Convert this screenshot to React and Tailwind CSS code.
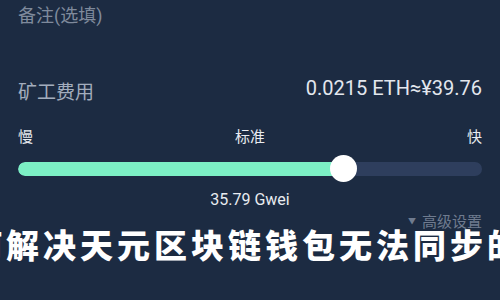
import React from "react";

export default function App() {
  const pct = 70;
  return (
    <div
      className="relative w-[500px] h-[300px] overflow-hidden bg-[#1c2b42]"
      style={{ fontFamily: '"Roboto", "Noto Sans CJK SC", sans-serif' }}
    >
      <div className="px-[18px]">
        {/* Note */}
        <div className="h-[30px] flex items-center text-[18px] text-[#7f8a9c]">备注(选填)</div>

        {/* Fee */}
        <div className="mt-[45px] h-[30px] flex items-center justify-between">
          <span className="text-[19px] leading-[22px] text-[#a3adbd] mt-[6px]">矿工费用</span>
          <span className="text-[20px] leading-[24px] text-[#e3e7ee] mb-[4px]">0.0215 ETH≈¥39.76</span>
        </div>

        {/* Speed labels */}
        <div className="mt-[23px] h-[18px] flex items-center justify-between text-[15px] text-[#e8ebf0]">
          <span>慢</span>
          <span>标准</span>
          <span>快</span>
        </div>

        {/* Slider */}
        <div className="relative mt-[9px] h-[28px] flex items-center">
          <div className="w-full h-[14px] rounded-full bg-[#2e3e5d] overflow-hidden">
            <div className="h-full rounded-full bg-[#7cf0c5]" style={{ width: `${pct}%` }} />
          </div>
          <div
            className="absolute top-[0px] w-[27px] h-[27px] -ml-[13px] rounded-full bg-white"
            style={{ left: `${pct}%` }}
          />
        </div>

        <div className="mt-[9px] h-[16px] flex items-center justify-center text-[16px] text-[#e8ebf0]">35.79 Gwei</div>

        <div className="mt-[5px] h-[18px] flex justify-end items-center gap-[6px] text-[15px] text-[#6f7b8f]">
          <span className="text-[8px]">▼</span>
          <span>高级设置</span>
        </div>
      </div>

      {/* Title overlay */}
      <div
        className="absolute left-[-68px] top-[224px] whitespace-nowrap text-[33px] leading-[40px] font-black tracking-[4px] text-white"
        style={{ fontFamily: '"Noto Sans CJK SC", sans-serif' }}
      >
        如何解决天元区块链钱包无法同步的问题
      </div>
    </div>
  );
}
